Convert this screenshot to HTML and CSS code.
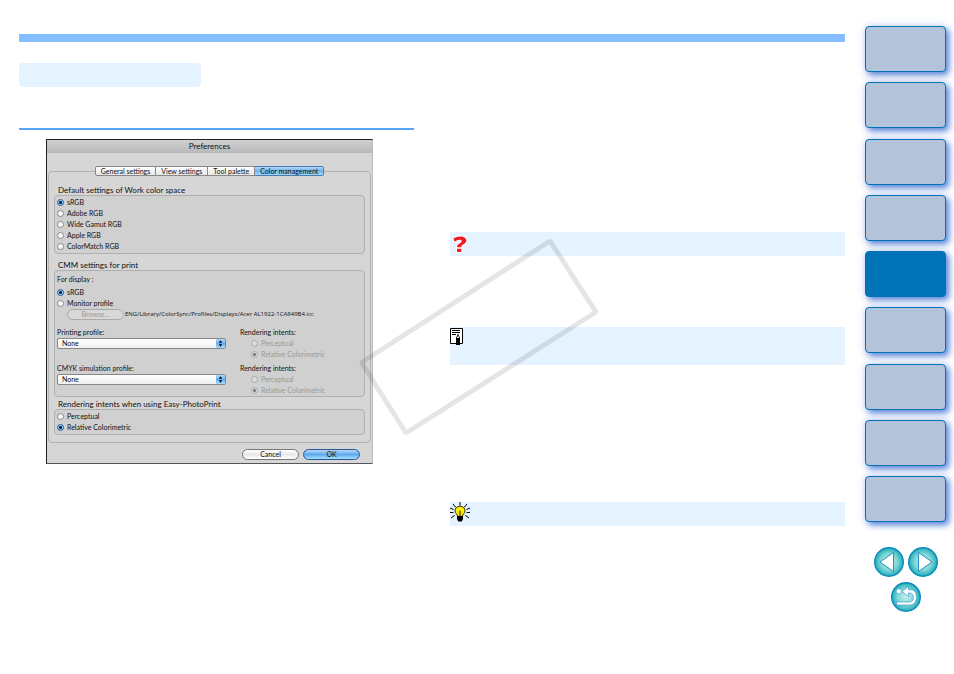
FILE: index.html
```html
<!DOCTYPE html>
<html lang="en">
<head>
    <meta charset="UTF-8">
    <meta name="viewport" content="width=device-width, initial-scale=1.0">
    <title>Preferences - Color management</title>
    <link rel="stylesheet" href="styles.css">
</head>
<body>
    <!-- Manual page -->
    <main class="page">
        <div class="top-bar"></div>
        <div class="columns">
            <section class="column">
                <div class="section-tag"></div>
                <div class="rule"></div>

                <!-- Preferences window -->
                <form class="dialog">
                    <h1 class="dialog-title">Preferences</h1>
                    <div class="tabs">
                        <button type="button" class="tab">General settings</button>
                        <button type="button" class="tab">View settings</button>
                        <button type="button" class="tab">Tool palette</button>
                        <button type="button" class="tab active">Color management</button>
                    </div>
                    <div class="panel">
                        <fieldset>
                            <legend>Default settings of Work color space</legend>
                            <div class="group">
                                <label class="option"><input type="radio" name="space" checked>sRGB</label>
                                <label class="option"><input type="radio" name="space">Adobe RGB</label>
                                <label class="option"><input type="radio" name="space">Wide Gamut RGB</label>
                                <label class="option"><input type="radio" name="space">Apple RGB</label>
                                <label class="option"><input type="radio" name="space">ColorMatch RGB</label>
                            </div>
                        </fieldset>

                        <fieldset class="cmm">
                            <legend>CMM settings for print</legend>
                            <div class="group">
                                <p class="caption">For display :</p>
                                <label class="option"><input type="radio" name="display" checked>sRGB</label>
                                <label class="option"><input type="radio" name="display">Monitor profile</label>
                                <div class="browse-row">
                                    <button type="button" class="button browse" disabled>Browse...</button>
                                    <span class="path">ENG/Library/ColorSync/Profiles/Displays/Acer AL1922-1CA849B4.icc</span>
                                </div>
                                <div class="profile-row">
                                    <div class="profile">
                                        <label for="printing">Printing profile:</label>
                                        <div class="select-box">
                                            <select id="printing"><option>None</option></select>
                                            <svg class="arrows" viewBox="0 0 9 9"><path d="M4.5 1.2 6.2 3.7H2.8zM4.5 7.8 6.2 5.3H2.8z"/></svg>
                                        </div>
                                    </div>
                                    <div class="intents">
                                        <p>Rendering intents:</p>
                                        <label class="option"><input type="radio" name="print-intent" disabled>Perceptual</label>
                                        <label class="option"><input type="radio" name="print-intent" checked disabled>Relative Colorimetric</label>
                                    </div>
                                </div>
                                <div class="profile-row">
                                    <div class="profile">
                                        <label for="cmyk">CMYK simulation profile:</label>
                                        <div class="select-box">
                                            <select id="cmyk"><option>None</option></select>
                                            <svg class="arrows" viewBox="0 0 9 9"><path d="M4.5 1.2 6.2 3.7H2.8zM4.5 7.8 6.2 5.3H2.8z"/></svg>
                                        </div>
                                    </div>
                                    <div class="intents">
                                        <p>Rendering intents:</p>
                                        <label class="option"><input type="radio" name="cmyk-intent" disabled>Perceptual</label>
                                        <label class="option"><input type="radio" name="cmyk-intent" checked disabled>Relative Colorimetric</label>
                                    </div>
                                </div>
                            </div>
                        </fieldset>

                        <fieldset class="easy">
                            <legend>Rendering intents when using Easy-PhotoPrint</legend>
                            <div class="group">
                                <label class="option"><input type="radio" name="easy">Perceptual</label>
                                <label class="option"><input type="radio" name="easy" checked>Relative Colorimetric</label>
                            </div>
                        </fieldset>
                    </div>
                    <div class="actions">
                        <button type="button" class="button">Cancel</button>
                        <button type="button" class="button ok">OK</button>
                    </div>
                </form>
            </section>

            <!-- Notes -->
            <section class="column notes">
                <div class="note question">
                    <svg width="20" height="24" viewBox="0 0 20 24">
                        <path d="M3.500 6.500C6.500 3.800 16.300 3.200 16.300 8.600 16.300 12.300 11.300 12.200 11.300 15.300H7C7 11.500 11.700 11.500 11.700 9 11.700 6.900 7 7.500 4.500 9.800zM7 16.800h4.300v3.200H7z" fill="#ed1c24" stroke="#fff" stroke-width="2" paint-order="stroke"/>
                    </svg>
                </div>
                <div class="note memo">
                    <svg width="20" height="20" viewBox="0 0 20 20">
                        <path d="M.5 1.500h12v15H.5z" fill="#fff" stroke="#000"/>
                        <path d="M2 3.500h8M2 5.500h8M2 7.500h4" stroke="#000"/>
                        <path d="M6 18v-7l2-4.500 2 4.500v7z"/>
                        <path d="M7 11 8 8l1 3z" fill="#fff"/>
                    </svg>
                </div>
                <div class="note tip">
                    <svg width="20" height="20" viewBox="0 0 20 20">
                        <path d="M10 0v3.500M3 2l3 3.500M17 2l-3 3.500M0 6l3.500 1.500M20 6l-3.500 1.500M0 10.500h3.500M16.500 10.500H20M1 16l3.500-2.500M19 16l-3.500-2.500" stroke="#000"/>
                        <path d="M7.500 14.500C7.500 12 5 11.500 5 8.700a5 4.500 0 0 1 10 0c0 2.800-2.500 3.300-2.500 5.800z" fill="#ffee00" stroke="#000" stroke-width=".8"/>
                        <path d="M9.300 14V9.500l.7-1 .7 1V14" fill="#a89600" stroke="#665b00" stroke-width=".7"/>
                        <path d="M7 14h6v3l-1.300 2.500H8.300L7 17z"/>
                    </svg>
                </div>
            </section>
        </div>
    </main>

    <!-- Chapter tabs and page buttons -->
    <aside class="sidebar">
        <nav class="chapters" aria-label="Chapters">
            <a href="#" aria-label="Chapter 1"></a>
            <a href="#" aria-label="Chapter 2"></a>
            <a href="#" aria-label="Chapter 3"></a>
            <a href="#" aria-label="Chapter 4"></a>
            <a href="#" class="current" aria-label="Chapter 5"></a>
            <a href="#" aria-label="Chapter 6"></a>
            <a href="#" aria-label="Chapter 7"></a>
            <a href="#" aria-label="Chapter 8"></a>
            <a href="#" aria-label="Chapter 9"></a>
        </nav>
        <nav class="pager" aria-label="Pages">
            <a href="#" aria-label="Previous page">
                <svg width="30" height="30" viewBox="0 0 30 30">
                    <defs>
                        <radialGradient id="ball">
                            <stop offset="0" stop-color="#c5eeee"/>
                            <stop offset=".6" stop-color="#7cd6d6"/>
                            <stop offset="1" stop-color="#1eacb6"/>
                        </radialGradient>
                    </defs>
                    <circle cx="15" cy="15" r="14.300" fill="url(#ball)" stroke="#0b8abf" stroke-width="1.400"/>
                    <path d="M19.500 5.500v19L6 15z" fill="#fff" stroke="#2c8fc4"/>
                </svg>
            </a>
            <a href="#" aria-label="Next page">
                <svg width="30" height="30" viewBox="0 0 30 30">
                    <circle cx="15" cy="15" r="14.300" fill="url(#ball)" stroke="#0b8abf" stroke-width="1.400"/>
                    <path d="M10.500 5.500v19L24 15z" fill="#fff" stroke="#2c8fc4"/>
                </svg>
            </a>
            <a href="#" aria-label="Back">
                <svg width="30" height="30" viewBox="0 0 30 30">
                    <circle cx="15" cy="15" r="14.300" fill="url(#ball)" stroke="#0b8abf" stroke-width="1.400"/>
                    <circle cx="7.800" cy="9.200" r="2.500" fill="#fff" stroke="#2c8fc4" stroke-width=".5"/>
                    <path d="M11 9.500 17.500 4.500v3.200H20c7.500 0 7.500 15.300-1 15.300H5.500v-3H19c4.500 0 4.500-9 0-9h-1.500v3.500z" fill="#fff" stroke="#2c8fc4" stroke-width=".6"/>
                </svg>
            </a>
        </nav>
    </aside>

    <!-- Stamp frame over the page -->
    <svg class="stamp" width="240" height="200" viewBox="0 0 240 200">
        <path d="M3.500 124.500 192 3l46 71L48 195z"/>
    </svg>
</body>
</html>
```

FILE: styles.css
```css
/* General Styles */
* {
    box-sizing: border-box;
}
body {
    position: relative;
    display: flex;
    gap: 20px;
    margin: 0;
    padding: 26px 8px 20px 19px;
    background: #fff;
    color: #111;
    font-family: Lato, sans-serif;
    font-size: 7px;
    line-height: 11px;
}
button, select, input {
    margin: 0;
    font: inherit;
    color: inherit;
}
p {
    margin: 0;
}

/* Page */
.page {
    flex: 1;
    padding-top: 8px;
}
.top-bar {
    height: 8px;
    background: #85bfff;
}
.columns {
    display: grid;
    grid-template-columns: 1fr 1fr;
    gap: 36px;
}
.section-tag {
    width: 182px;
    height: 24px;
    margin-top: 21px;
    border-radius: 4px;
    background: #e5f2ff;
}
.rule {
    height: 2px;
    margin-top: 41px;
    background: #55a5ff;
}

/* Preferences window */
.dialog {
    width: 327px;
    margin: 9px 0 0 27px;
    border: 1px solid #222;
    border-right-color: #bbb;
    border-bottom-color: #555;
    background: #d6d6d6;
}
.dialog-title {
    margin: 0;
    height: 13px;
    background: linear-gradient(#d0d0d0, #b8b8b8);
    font-size: 8px;
    font-weight: 400;
    line-height: 13px;
    text-align: center;
}
.tabs {
    position: relative;
    display: flex;
    justify-content: center;
    margin-top: 13px;
}
.tab {
    height: 10px;
    padding: 0 5px;
    border: 1px solid #888;
    border-left-width: 0;
    background: linear-gradient(#fff, #e6e6e6);
    line-height: 8px;
}
.tab:first-child {
    border-left-width: 1px;
    border-radius: 2px 0 0 2px;
}
.tab:last-child {
    border-radius: 0 2px 2px 0;
}
.tab.active {
    border-color: #4a7db5;
    background: linear-gradient(#b5d8f7, #6bb2f0 50%, #9fdcff);
}
.panel {
    margin: -5px 1px 0;
    padding: 13px 5px 7px;
    border: 1px solid #b2b2b2;
    border-radius: 4px;
}
fieldset {
    min-width: 0;
    margin: 0;
    padding: 0;
    border: 0;
}
legend {
    padding: 0 4px;
    font-size: 8px;
    line-height: 10px;
}
.group {
    padding: 1px 2px;
    border: 1px solid #b0b0b0;
    border-radius: 4px;
    background: #d0d0d0;
}
.cmm {
    margin-top: 6px;
}
.cmm .group {
    padding-bottom: 0;
}
.easy {
    margin-top: 2px;
}
.option {
    display: flex;
    align-items: center;
    gap: 3px;
    height: 11px;
}
input[type="radio"] {
    appearance: none;
    width: 7px;
    height: 7px;
    border: 1px solid #888;
    border-radius: 50%;
    background: #f8f8f8;
}
input[type="radio"]:checked {
    border-color: #2d5f9e;
    background: radial-gradient(#123 0 1px, #8cc5f5 2px);
}
input[type="radio"]:disabled {
    border-color: #aaa;
    background: #dcdcdc;
}
input[type="radio"]:disabled:checked {
    background: radial-gradient(#777 0 1px, #dcdcdc 2px);
}
.option:has(:disabled) {
    color: #999;
}
.caption {
    margin: 2px 0;
}
.browse-row {
    display: flex;
    gap: 1px;
    padding-left: 10px;
}
.path {
    font-family: "Open Sans", sans-serif;
    font-size: 6px;
}
.button {
    width: 57px;
    height: 11px;
    padding: 0;
    border: 1px solid #777;
    border-radius: 6px;
    background: linear-gradient(#fff, #e8e8e8 50%, #fff);
    line-height: 9px;
}
.button.browse {
    border-color: #aaa;
    background: #d8d8d8;
    color: #999;
}
.button.ok {
    border-color: #2a5596;
    background: linear-gradient(#b8d8f8, #5fa9ee 50%, #a5e2ff);
}
.profile-row {
    display: flex;
    gap: 14px;
    margin-top: 3px;
}
.browse-row + .profile-row {
    margin-top: 7px;
}
.profile {
    width: 169px;
}
.profile label {
    display: block;
}
.intents .option {
    padding-left: 11px;
}
.select-box {
    position: relative;
}
select {
    display: block;
    width: 100%;
    height: 11px;
    padding: 0 4px;
    appearance: none;
    border: 1px solid #888;
    border-radius: 2px;
    background: linear-gradient(#fff, #f0f0f0);
    line-height: 9px;
}
.arrows {
    position: absolute;
    top: 1px;
    right: 1px;
    width: 9px;
    height: 9px;
    background: linear-gradient(#b8d8f8, #63adf0 50%, #a5dcff);
}
.actions {
    display: flex;
    justify-content: flex-end;
    gap: 4px;
    padding: 6px 12px 3px;
}

/* Notes */
.notes {
    padding-top: 190px;
}
.note {
    height: 24px;
    background: #e5f2ff;
}
.note svg {
    display: block;
}
.memo {
    height: 38px;
    margin-top: 71px;
}
.tip {
    margin-top: 137px;
}

/* Sidebar */
.sidebar {
    width: 81px;
}
.chapters {
    display: flex;
    flex-direction: column;
    justify-content: space-between;
    height: 496px;
}
.chapters a {
    height: 46px;
    border: 1px solid #0072b8;
    border-radius: 4px;
    background: #b3c3da;
    box-shadow: 3px 3px 6px rgba(40, 95, 205, 0.75), 0 0 10px rgba(100, 140, 225, 0.25);
}
.chapters a.current {
    background: #0072b8;
}
.pager {
    display: flex;
    flex-wrap: wrap;
    justify-content: center;
    gap: 5px 4px;
    margin-top: 25px;
}
.pager a, .pager svg {
    display: block;
}

/* Stamp */
.stamp {
    position: absolute;
    left: 358px;
    top: 238px;
    pointer-events: none;
}
.stamp path {
    fill: none;
    stroke: rgba(0, 0, 0, 0.1);
    stroke-width: 5px;
    stroke-linejoin: bevel;
}
```
